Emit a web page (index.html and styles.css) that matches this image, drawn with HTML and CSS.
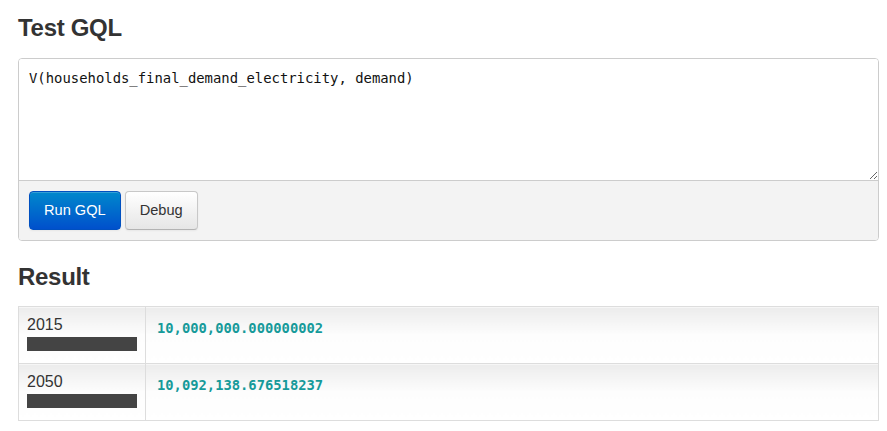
FILE: index.html
```html
<!DOCTYPE html>
<html>
<head>
<meta charset="utf-8">
<link rel="stylesheet" href="styles.css">
</head>
<body>
<div class="page">
  <h1 class="title">Test GQL</h1>
  <div class="editor">
    <textarea class="query" spellcheck="false">V(households_final_demand_electricity, demand)</textarea>
    <div class="editor-footer">
      <button class="btn btn-primary">Run GQL</button>
      <button class="btn">Debug</button>
    </div>
  </div>
  <h1 class="title result-title">Result</h1>
  <table class="results">
    <tr>
      <td class="year-cell"><div class="year">2015</div><div class="bar"></div></td>
      <td class="value-cell"><span class="value">10,000,000.000000002</span></td>
    </tr>
    <tr>
      <td class="year-cell"><div class="year">2050</div><div class="bar"></div></td>
      <td class="value-cell"><span class="value">10,092,138.676518237</span></td>
    </tr>
  </table>
</div>
</body>
</html>
```

FILE: styles.css
```css
html, body {
  margin: 0;
  padding: 0;
  background: #fff;
}
body {
  font-family: "Liberation Sans", Arial, sans-serif;
  color: #333;
}
.page {
  padding: 13px 8px 0 18px;
}
.title {
  margin: 0;
  font-size: 24px;
  line-height: 30px;
  font-weight: bold;
  color: #333;
  letter-spacing: -0.3px;
}
.editor {
  margin-top: 15px;
  border: 1px solid #ccc;
  border-radius: 4px;
  overflow: hidden;
}
.query {
  display: block;
  box-sizing: border-box;
  width: 100%;
  height: 121px;
  margin: 0;
  border: 0;
  outline: none;
  padding: 9px 10px;
  font-family: "DejaVu Sans Mono", monospace;
  font-size: 13.9px;
  line-height: 20px;
  color: #111;
  resize: vertical;
  background: #fff;
}
.editor-footer {
  border-top: 1px solid #ccc;
  background: #f3f3f3;
  padding: 10px;
  display: flex;
  gap: 4px;
}
.btn {
  font-family: "Liberation Sans", Arial, sans-serif;
  font-size: 14.6px;
  line-height: 19px;
  padding: 9px 14px;
  border: 1px solid #c8c8c8;
  border-bottom-color: #b3b3b3;
  border-radius: 4px;
  color: #333;
  background: linear-gradient(#ffffff, #e6e6e6);
  box-shadow: inset 0 1px 0 rgba(255,255,255,0.2), 0 1px 2px rgba(0,0,0,0.05);
  cursor: pointer;
}
.btn-primary {
  color: #fff;
  border-color: #0050c0;
  background: linear-gradient(#0088cc, #0050cc);
}
.result-title {
  margin-top: 21px;
}
.results {
  margin-top: 14px;
  width: 100%;
  border-collapse: collapse;
  border: 1px solid #ddd;
}
.results td {
  border: 1px solid #ddd;
  vertical-align: top;
  background: linear-gradient(#ececec, #fdfdfd 50%, #fff);
}
.year-cell {
  width: 110px;
  padding: 8px 8px 12px 8px;
}
.year {
  font-size: 16px;
  line-height: 20px;
  color: #333;
}
.bar {
  margin-top: 2px;
  width: 110px;
  height: 14px;
  background: #444;
}
.value-cell {
  padding: 11px;
}
.value {
  font-family: "DejaVu Sans Mono", monospace;
  font-weight: bold;
  font-size: 13.8px;
  line-height: 20px;
  color: #169a9a;
}
```
